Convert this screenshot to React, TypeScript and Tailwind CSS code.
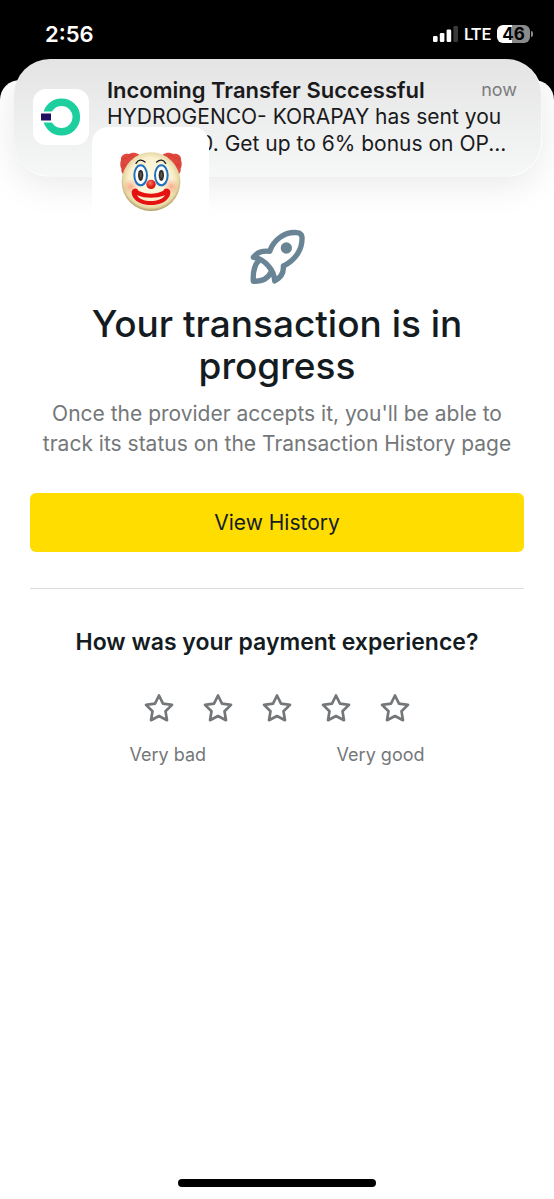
import { useState } from "react"

const ratings = [1, 2, 3, 4, 5]

function SignalBars() {
  return (
    <svg className="w-[25px] h-4" viewBox="0 0 25 16" aria-hidden="true">
      <rect x="0" y="10" width="4.6" height="6" rx="1.3" fill="#fff" />
      <rect x="6.8" y="7" width="4.6" height="9" rx="1.3" fill="#fff" />
      <rect x="13.6" y="3.5" width="4.6" height="12.5" rx="1.3" fill="#fff" />
      <rect x="20.4" y="0" width="4.6" height="16" rx="1.3" fill="#3a3a3a" />
    </svg>
  )
}

function BankLogo() {
  return (
    <svg className="w-14 h-14" viewBox="0 0 56 56" aria-hidden="true">
      <rect width="56" height="56" rx="13" fill="#fff" />
      <circle cx="28.5" cy="28" r="14.8" fill="none" stroke="#1dcf9f" strokeWidth="7.6" />
      <rect x="8" y="22.5" width="11" height="11" fill="#fff" />
      <rect x="8" y="24.5" width="10" height="7" fill="#210f60" />
    </svg>
  )
}

function Clown() {
  return (
    <svg className="w-16 h-[61px]" viewBox="100 93 192 183" role="img" aria-label="Clown face">
      <defs>
        <radialGradient id="skin" cx="50%" cy="47%" r="54%">
          <stop offset="0" stopColor="#fffbe6" />
          <stop offset="0.7" stopColor="#faf0cf" />
          <stop offset="0.88" stopColor="#e6d7a2" />
          <stop offset="1" stopColor="#a08c54" />
        </radialGradient>
        <radialGradient id="cheek">
          <stop offset="0" stopColor="#ff7c5c" stopOpacity="0.6" />
          <stop offset="1" stopColor="#ff9a78" stopOpacity="0" />
        </radialGradient>
        <radialGradient id="nose" cx="42%" cy="35%">
          <stop offset="0" stopColor="#ff7564" />
          <stop offset="1" stopColor="#d9180f" />
        </radialGradient>
      </defs>
      <g fill="#e0473d">
        <path d="M160 103C148 95 136 98 130 102C116 99 104 108 106 120C102 130 104 140 107 146C106 155 110 162 116 164L150 150Z" />
        <path d="M232 103C244 95 256 98 262 102C276 99 288 108 286 120C290 130 288 140 285 146C286 155 282 162 276 164L242 150Z" />
      </g>
      <g fill="none" stroke="#bb302c" strokeWidth="3" opacity="0.5">
        <path d="M110 120q8-10 16-4M128 110q10-8 16 0M108 138q7-8 14-2M282 120q-8-10-16-4M264 110q-10-8-16 0M284 138q-7-8-14-2" />
      </g>
      <circle cx="196" cy="185" r="88" fill="url(#skin)" />
      <circle cx="135" cy="200" r="24" fill="url(#cheek)" />
      <circle cx="257" cy="200" r="24" fill="url(#cheek)" />
      <path d="M151 130q11-17 27-4M213 126q16-13 27 4" fill="none" stroke="#1b1b1b" strokeWidth="4" strokeLinecap="round" />
      <g fill="#fff" stroke="#1f72bd" strokeWidth="6">
        <ellipse cx="165" cy="166" rx="19" ry="30" />
        <ellipse cx="227" cy="166" rx="19" ry="30" />
      </g>
      <g fill="#33302d">
        <ellipse cx="165" cy="166" rx="8" ry="17" />
        <ellipse cx="227" cy="166" rx="8" ry="17" />
      </g>
      <g fill="#5b5651">
        <ellipse cx="165" cy="165" rx="3" ry="9" />
        <ellipse cx="227" cy="165" rx="3" ry="9" />
      </g>
      <circle cx="196" cy="193" r="14" fill="url(#nose)" />
      <path
        d="M139 212c5-9 17-8 19 0 24 12 52 12 75 0 3-8 15-9 20 0 5 11-8 43-57 43s-62-32-57-43z"
        fill="#e5120f"
      />
      <path d="M154 226c25 10 59 10 84 0-11 22-73 24-84 0z" fill="#fbefd0" />
    </svg>
  )
}

function Rocket() {
  return (
    <svg
      className="w-14 h-14"
      viewBox="43 27 168 168"
      fill="none"
      stroke="#698595"
      strokeWidth="16"
      strokeLinecap="round"
      strokeLinejoin="round"
      aria-hidden="true"
    >
      <path d="M56 112C66 98 81 91 105 94C116 61 149 34 187 38Q200 39 202 51C204 87 183 120 146 138C148 160 137 174 120 183C119 165 112 150 102 139C91 126 76 114 56 112Z" />
      <path d="M75 119C58 134 54 153 56 184C83 185 101 175 110 155" />
      <circle cx="155" cy="84" r="17" fill="#698595" stroke="none" />
    </svg>
  )
}

function Star({ filled }: { filled: boolean }) {
  return (
    <svg
      className="w-[30px] h-[30px]"
      viewBox="0 0 30 30"
      fill={filled ? "#ffdd00" : "none"}
      stroke="#747779"
      strokeWidth="2.7"
      strokeLinejoin="round"
      aria-hidden="true"
    >
      <path d="M15 2.5L19 10.6L28 11.9L21.5 18.2L23 27.2L15 23L7 27.2L8.5 18.2L2 11.9L11 10.6Z" />
    </svg>
  )
}

export default function App() {
  const [rating, setRating] = useState(0)

  return (
    <div className="relative min-h-screen bg-black flex flex-col font-['Inter',sans-serif] overflow-hidden">
      {/* Status bar */}
      <header className="h-20 shrink-0 pl-[45px] pr-[21px] pt-5 flex items-start justify-between text-white">
        <span className="text-[22px] leading-7 font-semibold">2:56</span>
        <div className="flex items-center gap-1.5 h-7">
          <SignalBars />
          <span className="text-[17px] leading-7 font-medium font-['Roboto',sans-serif]">LTE</span>
          <div className="flex items-center gap-px">
            <span className="w-[33px] h-[18px] rounded-md bg-linear-to-r from-white from-45% to-[#8a8a8a] to-45% text-black text-[17px] leading-[18px] font-bold text-center">
              46
            </span>
            <span className="w-0.5 h-1.5 rounded-r-full bg-[#8a8a8a]" />
          </div>
        </div>
      </header>

      {/* Incoming notification */}
      <section
        aria-label="Notification"
        className="absolute z-10 top-[59px] left-3.5 right-3 h-[118px] rounded-[36px] border-r border-b border-white/70 bg-linear-to-b from-[#e4e4e4] to-[#f6f7f7] shadow-[0_8px_36px_rgba(0,0,0,0.09)] pl-[19px] pr-6 pt-[18px] flex items-start gap-[18px] text-[#1a1a1c]"
      >
        <div className="shrink-0 pt-3">
          <BankLogo />
        </div>
        <div className="flex-1 min-w-0">
          <div className="flex items-center justify-between">
            <h2 className="text-[22px] leading-[26px] font-semibold whitespace-nowrap">Incoming Transfer Successful</h2>
            <span className="text-lg leading-[26px] text-[#7c7c7e]">now</span>
          </div>
          <p className="text-[21px] leading-[27px] whitespace-nowrap">
            HYDROGENCO- KORAPAY has sent you
            <span className="block pl-[93px]">0. Get up to 6% bonus on OP...</span>
          </p>
        </div>
      </section>

      {/* Sticker */}
      <div className="absolute z-20 top-[127px] left-[92px] w-[117px] h-[110px] rounded-2xl bg-white flex justify-center pt-6">
        <Clown />
      </div>

      <main className="flex-1 bg-white rounded-t-[20px] px-[30px] pt-[149px] pb-3 flex flex-col items-center text-center">
        <Rocket />
        <h1 className="mt-[18px] max-w-[420px] text-[37px] leading-[42px] font-medium text-[#141c22]">
          Your transaction is in progress
        </h1>
        <p className="mt-3 text-[21px] leading-[30px] text-[#747779]">
          Once the provider accepts it, you'll be able to track its status on the Transaction History page
        </p>

        <button type="button" className="mt-[34px] w-full h-[59px] rounded-md bg-[#ffdd00] text-[21px] text-[#141c22]">
          View History
        </button>

        <hr className="mt-9 w-full border-t border-[#dcdcdc]" />

        <h2 className="mt-[38px] text-[23px] leading-[30px] font-semibold text-[#141c22]">
          How was your payment experience?
        </h2>
        <div className="mt-9 flex gap-[29px]">
          {ratings.map((value) => (
            <button key={value} type="button" aria-label={`Rate ${value} of 5`} onClick={() => setRating(value)}>
              <Star filled={value <= rating} />
            </button>
          ))}
        </div>
        <div className="mt-[18px] w-[295px] flex justify-between text-lg leading-7 text-[#747779]">
          <span>Very bad</span>
          <span>Very good</span>
        </div>

        <div className="mt-auto w-[198px] h-2 rounded-full bg-black" />
      </main>
    </div>
  )
}
